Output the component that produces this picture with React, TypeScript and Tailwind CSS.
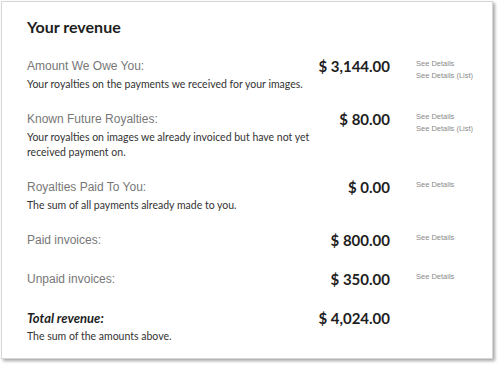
import React from "react";

type Row = {
  label: string;
  desc?: string;
  amount: string;
  links: string[];
  total?: boolean;
};

const rows: Row[] = [
  {
    label: "Amount We Owe You:",
    desc: "Your royalties on the payments we received for your images.",
    amount: "$ 3,144.00",
    links: ["See Details", "See Details (List)"],
  },
  {
    label: "Known Future Royalties:",
    desc: "Your royalties on images we already invoiced but have not yet received payment on.",
    amount: "$ 80.00",
    links: ["See Details", "See Details (List)"],
  },
  {
    label: "Royalties Paid To You:",
    desc: "The sum of all payments already made to you.",
    amount: "$ 0.00",
    links: ["See Details"],
  },
  { label: "Paid invoices:", amount: "$ 800.00", links: ["See Details"] },
  { label: "Unpaid invoices:", amount: "$ 350.00", links: ["See Details"] },
  {
    label: "Total revenue:",
    desc: "The sum of the amounts above.",
    amount: "$ 4,024.00",
    links: [],
    total: true,
  },
];

const muli = "font-['Lato','Open_Sans',sans-serif]";

export default function App() {
  return (
    <div className="w-[500px] h-[366px] bg-white pl-px pt-px">
      <div
        className={`w-[492px] h-[358px] bg-white border border-[#d6d6d6] shadow-[2px_2px_3px_rgba(0,0,0,0.35)] pl-[25px] pt-[13px] ${muli}`}
      >
        <h1 className="text-[16px] font-bold text-[#1e1e1e] leading-[24px]">Your revenue</h1>
        <div className="mt-[18px] flex flex-col">
          {rows.map((r) => (
            <div key={r.label} className="flex items-start">
              <div className="w-[287px]">
                {r.total ? (
                  <div className="text-[13px] font-bold italic text-[#1e1e1e] leading-[18px]">{r.label}</div>
                ) : (
                  <div className="font-['Liberation_Sans',Arial,sans-serif] text-[12px] text-[#777] leading-[18px]">{r.label}</div>
                )}
                {r.desc && (
                  <div className="mt-[2px] text-[10.5px] text-[#333] leading-[15px]">{r.desc}</div>
                )}
                <div className={r.desc ? "h-[18px]" : "h-[21px]"} />
              </div>
              <div className="w-[76px] text-right text-[15px] font-bold text-[#1e1e1e] leading-[18px]">
                {r.amount}
              </div>
              <div className="ml-[26px] pt-[1px] flex flex-col font-['Liberation_Sans',Arial,sans-serif] text-[7.5px] leading-[12px] text-[#8a8a8a]">
                {r.links.map((l) => (
                  <span key={l}>{l}</span>
                ))}
              </div>
            </div>
          ))}
        </div>
      </div>
    </div>
  );
}
